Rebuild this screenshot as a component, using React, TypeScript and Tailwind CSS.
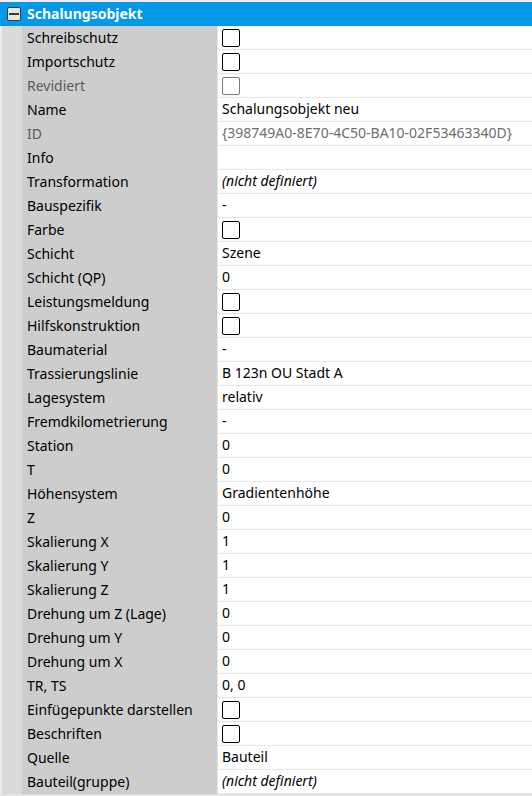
import React from 'react';

type Row = {
  label: string;
  value?: string;
  check?: boolean;
  italic?: boolean;
  muted?: boolean;
};

const rows: Row[] = [
  { label: 'Schreibschutz', check: true },
  { label: 'Importschutz', check: true },
  { label: 'Revidiert', check: true, muted: true },
  { label: 'Name', value: 'Schalungsobjekt neu' },
  { label: 'ID', value: '{398749A0-8E70-4C50-BA10-02F53463340D}', muted: true },
  { label: 'Info', value: '' },
  { label: 'Transformation', value: '(nicht definiert)', italic: true },
  { label: 'Bauspezifik', value: '-' },
  { label: 'Farbe', check: true },
  { label: 'Schicht', value: 'Szene' },
  { label: 'Schicht (QP)', value: '0' },
  { label: 'Leistungsmeldung', check: true },
  { label: 'Hilfskonstruktion', check: true },
  { label: 'Baumaterial', value: '-' },
  { label: 'Trassierungslinie', value: 'B 123n OU Stadt A' },
  { label: 'Lagesystem', value: 'relativ' },
  { label: 'Fremdkilometrierung', value: '-' },
  { label: 'Station', value: '0' },
  { label: 'T', value: '0' },
  { label: 'Höhensystem', value: 'Gradientenhöhe' },
  { label: 'Z', value: '0' },
  { label: 'Skalierung X', value: '1' },
  { label: 'Skalierung Y', value: '1' },
  { label: 'Skalierung Z', value: '1' },
  { label: 'Drehung um Z (Lage)', value: '0' },
  { label: 'Drehung um Y', value: '0' },
  { label: 'Drehung um X', value: '0' },
  { label: 'TR, TS', value: '0, 0' },
  { label: 'Einfügepunkte darstellen', check: true },
  { label: 'Beschriften', check: true },
  { label: 'Quelle', value: 'Bauteil' },
  { label: 'Bauteil(gruppe)', value: '(nicht definiert)', italic: true },
];

function Checkbox({ muted }: { muted?: boolean }) {
  return (
    <div
      className={`h-[18px] w-[18px] rounded-[2px] border bg-white ${
        muted ? 'border-[#7a7a7a]' : 'border-black'
      }`}
    />
  );
}

export default function App() {
  return (
    <div
      className="flex h-[796px] w-[532px] flex-col bg-[#e3e3e3] text-[14px] text-black"
      style={{ fontFamily: '"Noto Sans", "Open Sans", sans-serif' }}
    >
      <div className="h-[2px] bg-[#f0f0f0]" />
      {/* group header */}
      <div className="flex h-[24px] items-center bg-[#0399e6]">
        <div className="ml-[7px] flex h-[14px] w-[14px] items-center justify-center rounded-[2px] border border-[#3c3c3c] bg-[#e6e6e6]">
          <div className="h-[2px] w-[10px] bg-[#3c3c3c]" />
        </div>
        <span className="ml-[6px] text-[14px] font-bold leading-none text-white">Schalungsobjekt</span>
      </div>

      <div className="flex">
        <div className="w-[22px] border-l-[2px] border-[#ececec] bg-[#dadada]" />
        <div className="flex-1">
          {rows.map((row) => (
            <div key={row.label} className="flex h-[24px]">
              <div
                className={`flex w-[195px] items-center bg-[#cdcdcd] pb-[2px] pl-[5px] ${
                  row.muted ? 'text-[#5a5a5a]' : ''
                }`}
              >
                {row.label}
              </div>
              <div className="flex flex-1 items-center border-b border-l border-[#e5e5e5] bg-white pl-[4px]">
                {row.check ? (
                  <Checkbox muted={row.muted} />
                ) : (
                  <span
                    className={`-mt-[2px] ${row.italic ? 'italic' : ''} ${row.muted ? 'text-[#6e6e6e]' : ''}`}
                  >
                    {row.value}
                  </span>
                )}
              </div>
            </div>
          ))}
        </div>
      </div>
    </div>
  );
}
